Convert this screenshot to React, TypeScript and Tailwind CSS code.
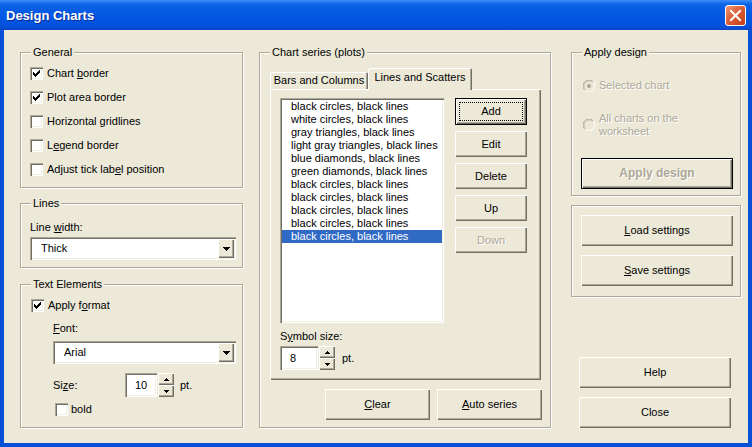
import React from "react";

const raised =
  "bg-[#ece9d8] shadow-[inset_1px_1px_0_#fff,inset_-1px_-1px_0_#716f64,inset_-2px_-2px_0_#aca899]";
const sunken =
  "bg-white shadow-[inset_1px_1px_0_#aca899,inset_2px_2px_0_#716f64,inset_-1px_-1px_0_#fff,inset_-2px_-2px_0_#f1efe2]";
const disabledText = "text-[#aca899] [text-shadow:1px_1px_0_#fff]";

const CHECK = ["......#", ".....##", "#...###", "##.###.", "#####..", ".###...", "..#...."];
const DOWN7 = ["#######", ".#####.", "..###..", "...#..."];
const UP5 = ["..#..", ".###.", "#####"];
const DOWN5 = ["#####", ".###.", "..#.."];

function Pix({ rows, color = "#000" }: { rows: string[]; color?: string }) {
  return (
    <svg width={rows[0].length} height={rows.length} shapeRendering="crispEdges" className="block">
      {rows.flatMap((r, y) =>
        r.split("").map((c, x) =>
          c === "#" ? <rect key={`${x}-${y}`} x={x} y={y} width={1} height={1} fill={color} /> : null
        )
      )}
    </svg>
  );
}

function Checkbox({ checked }: { checked?: boolean }) {
  return (
    <div className={`flex h-[13px] w-[13px] shrink-0 items-center justify-center ${sunken}`}>
      {checked && <Pix rows={CHECK} />}
    </div>
  );
}

function Radio({ checked }: { checked?: boolean }) {
  return (
    <svg width="12" height="12" className="block shrink-0">
      <path d="M10.2 1.8 A5.9 5.9 0 0 0 1.8 10.2" fill="none" stroke="#aca899" strokeWidth="1" />
      <path d="M9.5 2.5 A4.9 4.9 0 0 0 2.5 9.5" fill="none" stroke="#c9c6b6" strokeWidth="1" />
      <path d="M1.8 10.2 A5.9 5.9 0 0 0 10.2 1.8" fill="none" stroke="#fff" strokeWidth="1" />
      {checked && <circle cx="6" cy="6" r="2" fill="#aca899" />}
    </svg>
  );
}

function Btn({
  children,
  className = "",
  isDefault,
  focused,
  disabled,
  bold,
}: {
  children: React.ReactNode;
  className?: string;
  isDefault?: boolean;
  focused?: boolean;
  disabled?: boolean;
  bold?: boolean;
}) {
  return (
    <div
      className={`flex shrink-0 items-center justify-center ${raised} ${isDefault ? "border border-black" : ""} ${className}`}
    >
      <div
        className={`flex items-center justify-center ${focused ? "h-[calc(100%-6px)] w-[calc(100%-6px)] border border-dotted border-black" : ""} ${disabled ? disabledText : ""} ${bold ? "font-bold" : ""}`}
      >
        {children}
      </div>
    </div>
  );
}

function Combo({ value, className = "" }: { value: string; className?: string }) {
  return (
    <div className={`flex h-[23px] items-center ${sunken} ${className}`}>
      <span className="pl-[11px]">{value}</span>
      <div className={`ml-auto mr-[2px] flex h-[19px] w-[16px] items-center justify-center ${raised}`}>
        <Pix rows={DOWN7} />
      </div>
    </div>
  );
}

function Spin({ value, boxClass }: { value: string; boxClass: string }) {
  return (
    <div className="flex h-[24px]">
      <div className={`flex h-full items-center ${sunken} ${boxClass}`}>{value}</div>
      <div className="ml-[1px] flex w-[16px] flex-col">
        <div className={`flex h-1/2 items-center justify-center ${raised}`}>
          <Pix rows={UP5} />
        </div>
        <div className={`flex h-1/2 items-center justify-center ${raised}`}>
          <Pix rows={DOWN5} />
        </div>
      </div>
    </div>
  );
}

function Group({
  legend,
  className = "",
  children,
}: {
  legend: string;
  className?: string;
  children: React.ReactNode;
}) {
  return (
    <fieldset className={`min-w-0 border border-[#aca899] shadow-[inset_1px_1px_0_#fff,1px_1px_0_#fff] ${className}`}>
      <legend className="ml-[10px] bg-[#ece9d8] px-[2px] leading-[13px]">{legend}</legend>
      {children}
    </fieldset>
  );
}

const U = ({ children }: { children: React.ReactNode }) => <span className="underline underline-offset-[1px]">{children}</span>;

function CheckRow({ checked, children }: { checked?: boolean; children: React.ReactNode }) {
  return (
    <div className="flex h-[24px] items-center gap-[4px]">
      <Checkbox checked={checked} />
      <span className="leading-[13px]">{children}</span>
    </div>
  );
}

const series = [
  "black circles, black lines",
  "white circles, black lines",
  "gray triangles, black lines",
  "light gray triangles, black lines",
  "blue diamonds, black lines",
  "green diamonds, black lines",
  "black circles, black lines",
  "black circles, black lines",
  "black circles, black lines",
  "black circles, black lines",
  "black circles, black lines",
];

export default function App() {
  return (
    <div className="h-[447px] w-[752px] overflow-hidden font-['Liberation_Sans',Arial,sans-serif] text-[11px] leading-[13px] text-black">
      {/* title bar */}
      <div className="flex h-[30px] items-center justify-between bg-[linear-gradient(to_bottom,#3d8ff9_0%,#0d63e6_14%,#0458e4_50%,#0452de_85%,#0a45c6_100%)] pl-[6px] pr-[6px]">
        <span className="text-[13px] font-bold text-white [text-shadow:1px_1px_0_#0a2b8f]">Design Charts</span>
        <div className="flex h-[21px] w-[21px] items-center justify-center rounded-[3px] border border-white bg-[linear-gradient(135deg,#ef9c7e_0%,#df6a45_35%,#cd4b25_75%,#c0401c_100%)]">
          <svg width="19" height="19" className="block">
            <path d="M5 5 L14 14 M14 5 L5 14" stroke="#fff" strokeWidth="2" strokeLinecap="square" />
          </svg>
        </div>
      </div>

      {/* body */}
      <div className="flex h-[417px] border-x-4 border-b-4 border-[#0850d8] bg-[#ece9d8] pb-[15px] pl-[16px] pt-[16px]">
        {/* left column */}
        <div className="flex w-[223px] flex-col">
          <Group legend="General" className="h-[142px]">
            <div className="flex flex-col pl-[9px] pt-[2px]">
              <CheckRow checked>
                Chart <U>b</U>order
              </CheckRow>
              <CheckRow checked>Plot area border</CheckRow>
              <CheckRow>
                Horizontal <U>g</U>ridlines
              </CheckRow>
              <CheckRow>
                L<U>e</U>gend border
              </CheckRow>
              <CheckRow>
                Adjust tick lab<U>e</U>l position
              </CheckRow>
            </div>
          </Group>

          <Group legend="Lines" className="mt-[9px] h-[71px]">
            <div className="flex flex-col pl-[9px] pt-[11px]">
              <span>
                Line <U>w</U>idth:
              </span>
              <Combo value="Thick" className="mt-[3px] w-[206px]" />
            </div>
          </Group>

          <Group legend="Text Elements" className="mt-[10px] h-[150px]">
            <div className="flex flex-col pl-[10px] pt-[6px]">
              <div className="flex h-[16px] items-center gap-[4px]">
                <Checkbox checked />
                <span>
                  Apply f<U>o</U>rmat
                </span>
              </div>
              <div className="flex flex-col pl-[22px]">
                <span className="mt-[9px]">
                  <U>F</U>ont:
                </span>
                <Combo value="Arial" className="mt-[6px] w-[183px]" />
                <div className="mt-[9px] flex items-center">
                  <span className="w-[72px]">
                    Si<U>z</U>e:
                  </span>
                  <Spin value="10" boxClass="w-[32px] justify-center" />
                  <span className="ml-[6px]">pt.</span>
                </div>
                <div className="ml-[2px] mt-[4px] flex h-[16px] items-center gap-[3px]">
                  <Checkbox />
                  <span>bold</span>
                </div>
              </div>
            </div>
          </Group>
        </div>

        {/* middle column */}
        <Group legend="Chart series (plots)" className="ml-[16px] h-[382px] w-[292px]">
          <div className="flex flex-col pl-[10px] pt-[9px]">
            <div className="flex h-[21px] items-end">
              <div className="flex h-[17px] w-[98px] items-center justify-center rounded-t-[2px] bg-[#ece9d8] shadow-[inset_1px_1px_0_#fff,inset_-1px_0_0_#716f64,inset_-2px_0_0_#aca899]">
                Bars and Columns
              </div>
              <div className="relative z-10 -mb-[1px] flex h-[22px] w-[104px] items-start justify-center rounded-t-[2px] bg-[#ece9d8] pt-[3px] shadow-[inset_1px_1px_0_#fff,inset_-1px_0_0_#716f64,inset_-2px_0_0_#aca899]">
                Lines and Scatters
              </div>
            </div>
            <div className={`flex h-[291px] w-[271px] flex-col pl-[10px] pt-[9px] ${raised}`}>
              <div className="flex">
                <div className={`h-[225px] w-[164px] p-[2px] ${sunken}`}>
                  {series.map((s, i) => (
                    <div
                      key={i}
                      className={`h-[13px] whitespace-nowrap pl-[9px] leading-[13px] ${i === series.length - 1 ? "bg-[#316ac5] text-white" : ""}`}
                    >
                      {s}
                    </div>
                  ))}
                </div>
                <div className="ml-[11px] flex flex-col gap-[6px]">
                  <Btn isDefault focused className="h-[27px] w-[72px]">
                    Add
                  </Btn>
                  <Btn className="h-[26px] w-[72px]">Edit</Btn>
                  <Btn className="h-[26px] w-[72px]">Delete</Btn>
                  <Btn className="h-[26px] w-[72px]">Up</Btn>
                  <Btn disabled className="h-[26px] w-[72px]">
                    Down
                  </Btn>
                </div>
              </div>
              <span className="mt-[7px]">
                S<U>y</U>mbol size:
              </span>
              <div className="mt-[3px] flex items-center">
                <Spin value="8" boxClass="w-[38px] pl-[10px]" />
                <span className="ml-[7px]">pt.</span>
              </div>
            </div>
            <div className="mt-[9px] flex w-[272px] justify-end gap-[7px]">
              <Btn className="h-[31px] w-[105px]">
                <U>C</U>lear
              </Btn>
              <Btn className="h-[31px] w-[105px]">
                <U>A</U>uto series
              </Btn>
            </div>
          </div>
        </Group>

        {/* right column */}
        <div className="ml-[20px] flex w-[170px] flex-col">
          <Group legend="Apply design" className="h-[150px]">
            <div className="flex flex-col pl-[9px] pt-[20px]">
              <div className={`ml-[2px] flex items-center gap-[4px] ${disabledText}`}>
                <Radio checked />
                <span>Selected chart</span>
              </div>
              <div className={`ml-[2px] mt-[20px] flex items-center gap-[4px] ${disabledText}`}>
                <Radio />
                <span className="w-[90px]">All charts on the worksheet</span>
              </div>
              <Btn isDefault disabled bold className="mt-[20px] h-[31px] w-[152px] text-[12px]">
                Apply design
              </Btn>
            </div>
          </Group>

          <div className="mt-[9px] flex h-[92px] flex-col gap-[9px] border border-[#aca899] pl-[9px] pt-[9px] shadow-[inset_1px_1px_0_#fff,1px_1px_0_#fff]">
            <Btn className="h-[31px] w-[152px]">
              <U>L</U>oad settings
            </Btn>
            <Btn className="h-[31px] w-[152px]">
              <U>S</U>ave settings
            </Btn>
          </div>

          <div className="mt-auto flex flex-col gap-[9px] pl-[8px]">
            <Btn className="h-[31px] w-[152px]">Help</Btn>
            <Btn className="h-[31px] w-[152px]">Close</Btn>
          </div>
        </div>
      </div>
    </div>
  );
}
